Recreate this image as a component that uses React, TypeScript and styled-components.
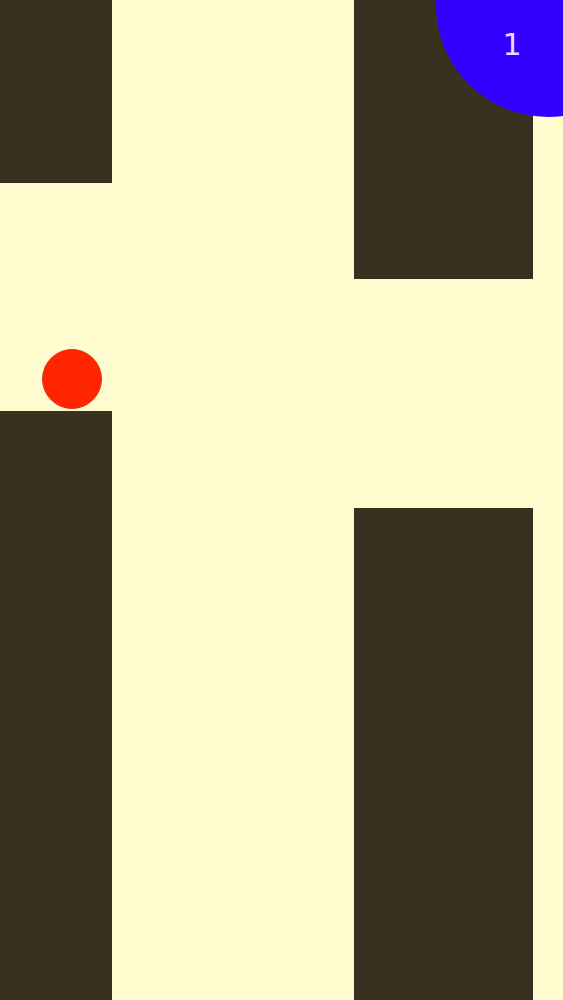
import React from "react"
import styled, { createGlobalStyle } from "styled-components"

const GlobalStyle = createGlobalStyle`
    html, body {
        margin: 0;
        padding: 0;
        background: #fffdd0;
    }
`

type Pipe = { x: number; top: number; width: number; height: number }

// columns as they stand on the playfield right now
const pipes: Pipe[] = [
    { x: 0, top: 0, width: 112, height: 183 },
    { x: 0, top: 411, width: 112, height: 589 },
    { x: 354, top: 0, width: 179, height: 279 },
    { x: 354, top: 508, width: 179, height: 492 },
]

export default function App() {
    return <>
        <GlobalStyle />
        <Stage>
            {pipes.map((p, i) =>
                <Column key={i} style={{ left: p.x, top: p.top, width: p.width, height: p.height }} />
            )}
            <Ball />
            <Score>
                <ScoreText>1</ScoreText>
            </Score>
        </Stage>
    </>
}

const Stage = styled.div`
    position: relative;
    width: 563px;
    height: 1000px;
    overflow: hidden;
    background: #fffdd0;
`

const Column = styled.div`
    position: absolute;
    background: #3a3020;
`

const Ball = styled.div`
    position: absolute;
    left: 42px;
    top: 349px;
    width: 60px;
    height: 60px;
    border-radius: 50%;
    background: #ff2500;
    box-sizing: border-box;
    border: 1px solid #e8300c;
`

const Score = styled.div`
    position: absolute;
    left: 436px;
    top: -107px;
    width: 224px;
    height: 224px;
    border-radius: 50%;
    background: #3300ff;
`

const ScoreText = styled.div`
    position: absolute;
    left: 60px;
    top: 134px;
    width: 32px;
    text-align: center;
    font-family: "DejaVu Sans", sans-serif;
    font-size: 30px;
    line-height: 36px;
    color: #e4ddff;
`
